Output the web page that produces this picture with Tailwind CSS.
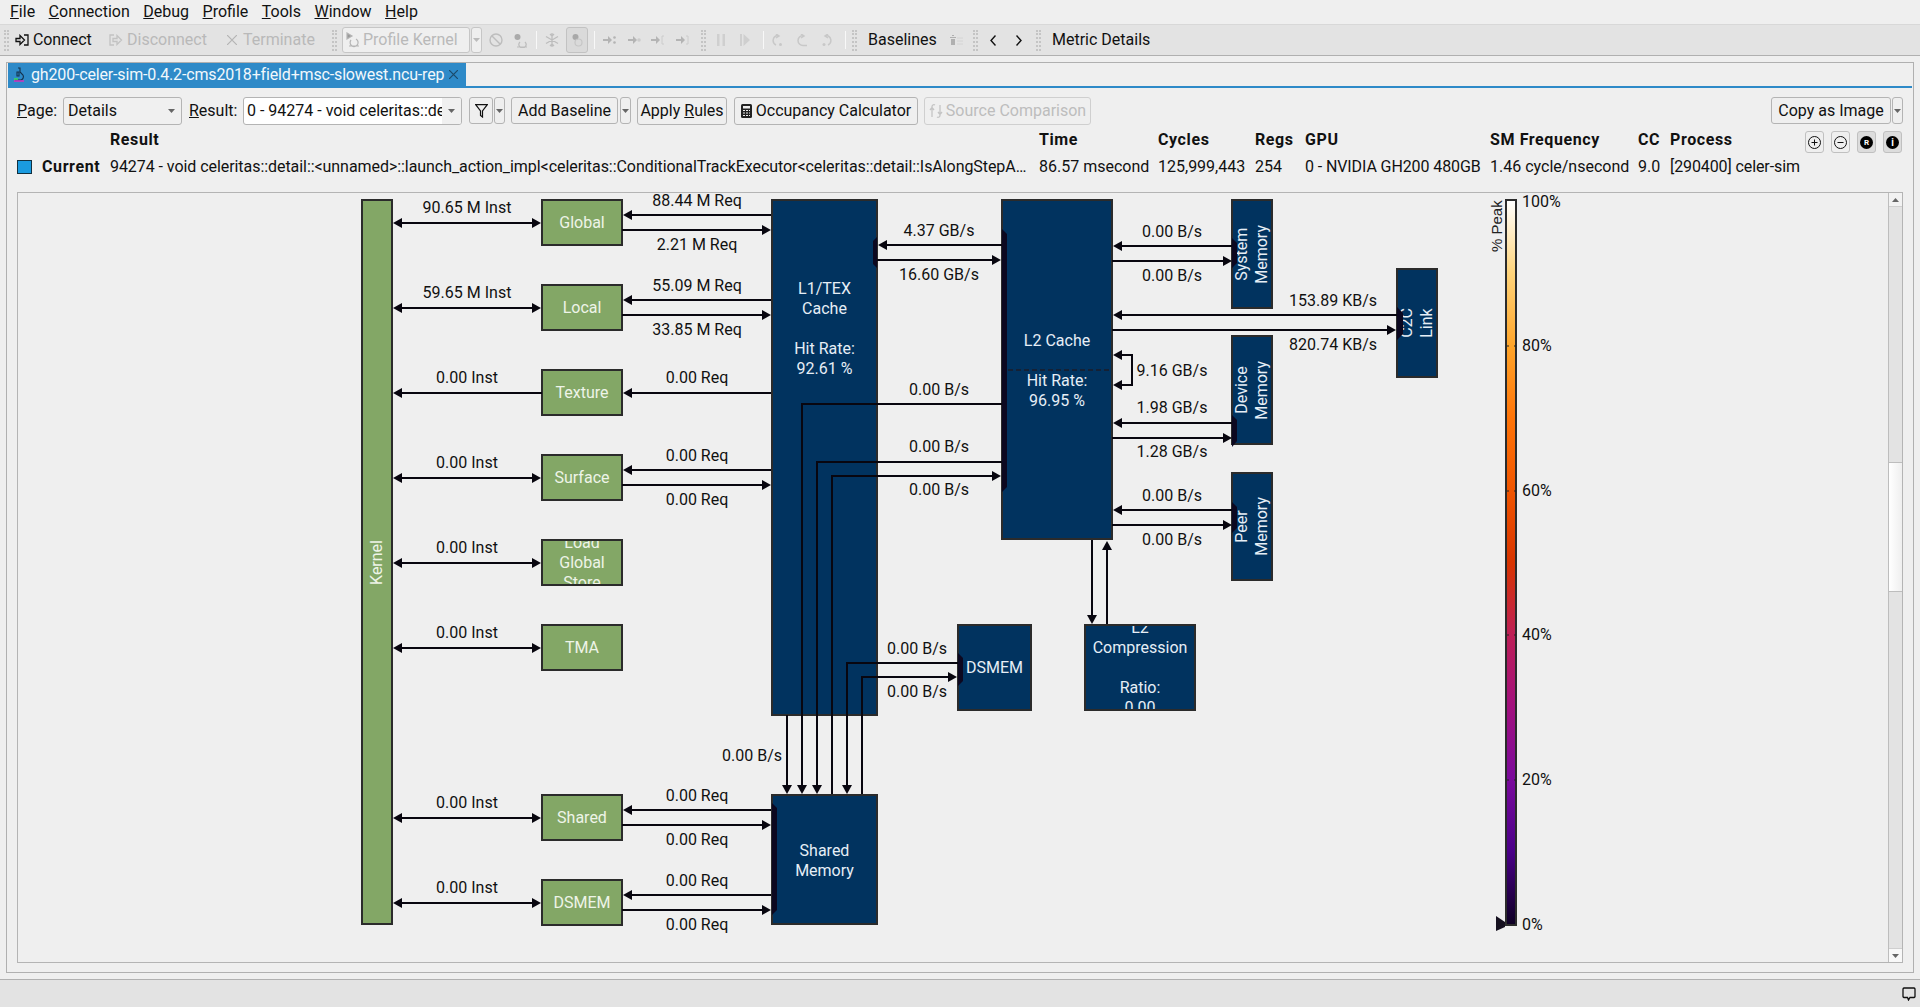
<!DOCTYPE html>
<html lang="en">
<head>
  <meta charset="UTF-8">
  <title>Nsight Compute</title>
  <script src="https://cdn.jsdelivr.net/npm/@tailwindcss/browser@4"></script>
</head>
<body class="w-[1920px] h-[1007px] overflow-hidden flex flex-col bg-[#efefef] text-[#111] text-base [font-family:Roboto,sans-serif]">

  <svg class="hidden">
    <symbol id="caret" viewBox="0 0 7 4"><path d="M0 0H7L3.5 4z" fill="#666"/></symbol>
    <symbol id="caretOff" viewBox="0 0 7 4"><path d="M0 0H7L3.5 4z" fill="#bbb"/></symbol>
  </svg>

  <!-- Menu bar -->
  <div class="h-[25px] shrink-0 flex items-center gap-[13.5px] pl-[10px] border-b border-[#d8d8d8]">
    <span><u>F</u>ile</span>
    <span><u>C</u>onnection</span>
    <span><u>D</u>ebug</span>
    <span><u>P</u>rofile</span>
    <span><u>T</u>ools</span>
    <span><u>W</u>indow</span>
    <span><u>H</u>elp</span>
  </div>

  <!-- Toolbar -->
  <div class="h-[31px] shrink-0 flex items-center pl-[4px] bg-[#e3e3e3] border-b border-[#b0b0b0] text-[#b9b9b9]">
    <div class="w-[5px] h-[21px] border-x-2 border-dotted border-[#c4c4c4]"></div>
    <svg class="ml-[6px] w-[14px] h-[12px]" viewBox="0 0 14 12" fill="none" stroke="#111" stroke-width="1.3"><path d="M1 4.5H5V1.5L9.5 6L5 10.5V7.5H1z"/><path d="M9 1H13V11H9"/></svg>
    <span class="ml-[4px] w-[76px] text-[#111] tracking-[-0.1px]">Connect</span>
    <svg class="w-[14px] h-[12px]" viewBox="0 0 14 12" fill="none" stroke="#c2c2c2" stroke-width="1.3"><path d="M5 1H1V11H5"/><path d="M4 4.5H8V1.5L12.5 6L8 10.5V7.5H4z"/></svg>
    <span class="ml-[4px] w-[100px]">Disconnect</span>
    <svg class="w-[10px] h-[10px]" viewBox="0 0 10 10" stroke="#b4b4b4" stroke-width="1.2"><path d="M0 0L10 10M10 0L0 10"/></svg>
    <span class="ml-[6px] w-[89px]">Terminate</span>
    <div class="w-[5px] h-[21px] border-x-2 border-dotted border-[#c4c4c4]"></div>
    <div class="ml-[5px] w-[128px] h-[26px] flex items-center pl-[3px] bg-[#efefef] border border-[#c6c6c6] rounded-[3px]">
      <svg class="w-[15px] h-[16px]" viewBox="0 0 15 16" fill="none" stroke="#b5b5b5" stroke-width="1.2"><path d="M1 1L6 4L1 7z" fill="#999"/><path d="M5 8a4 4 0 1 0 5 -1M3 14H13"/></svg>
      <span class="ml-[2px]">Profile Kernel</span>
    </div>
    <div class="ml-px w-[11px] h-[26px] flex items-center justify-center bg-[#efefef] border border-[#c6c6c6] rounded-[3px]"><svg class="w-[7px] h-[4px]"><use href="#caretOff"/></svg></div>
    <div class="w-[25px] ml-px flex justify-center">
      <svg class="w-[14px] h-[14px]" viewBox="0 0 14 14" fill="none" stroke="#bdbdbd" stroke-width="1.4"><circle cx="7" cy="7" r="6"/><path d="M3 3L11 11"/></svg>
    </div>
    <div class="w-[24px] flex justify-center">
      <svg class="w-[15px] h-[15px]" viewBox="0 0 15 15" fill="none" stroke="#bdbdbd" stroke-width="1.2"><circle cx="4.500" cy="4" r="3" fill="#aaa" stroke="none"/><path d="M7 9a3.500 3.500 0 1 0 5 0M4 14H14"/></svg>
    </div>
    <div class="ml-[4px] w-px h-[18px] bg-[#f8f8f8]"></div>
    <div class="w-[8px]"></div>
    <svg class="w-[14px] h-[14px]" viewBox="0 0 14 14" stroke="#bdbdbd" stroke-width="1.300" fill="none"><path d="M7 0V14M1 3.500L13 10.500M13 3.500L1 10.500M5 1L7 3L9 1M5 13L7 11L9 13"/></svg>
    <div class="ml-[7px] w-[22px] h-[26px] flex items-center justify-center bg-[#dadada] border border-[#c2c2c2] rounded-[3px]">
      <svg class="w-[15px] h-[15px]" viewBox="0 0 15 15" fill="none" stroke="#c6c6c6" stroke-width="1.2"><circle cx="5.500" cy="4" r="3" fill="#a8a8a8" stroke="none"/><circle cx="8.500" cy="9.500" r="3.500"/></svg>
    </div>
    <div class="ml-[6px] w-px h-[18px] bg-[#f8f8f8]"></div>

    <!-- Step buttons -->
    <div class="w-[28px] flex justify-center">
      <svg class="w-[13px] h-[10px]" viewBox="0 0 13 10" fill="#b4b4b4"><path d="M0 4H5V1L9 5L5 9V6H0z"/><circle cx="11.500" cy="2.500" r="1.300"/><circle cx="11.500" cy="7.500" r="1.300"/></svg>
    </div>
    <div class="w-[22px] flex justify-center">
      <svg class="w-[13px] h-[10px]" viewBox="0 0 13 10" fill="#b4b4b4"><path d="M0 4H5V1L9 5L5 9V6H0z"/><circle cx="11" cy="5" r="1.800" fill="#ccc"/></svg>
    </div>
    <div class="w-[24px] flex justify-center">
      <svg class="w-[13px] h-[10px]" viewBox="0 0 13 10" fill="#b4b4b4"><path d="M0 4H5V1L9 5L5 9V6H0z"/><path d="M13 1H11V9H13" fill="none" stroke="#ccc"/></svg>
    </div>
    <div class="w-[26px] flex justify-center">
      <svg class="w-[13px] h-[10px]" viewBox="0 0 13 10" fill="#b4b4b4"><path d="M0 4H5V1L9 5L5 9V6H0z"/><path d="M10 1H12V9H10" fill="none" stroke="#ccc"/></svg>
    </div>
    <div class="ml-[6px] w-[5px] h-[21px] border-x-2 border-dotted border-[#c4c4c4]"></div>
    <div class="w-[30px] flex justify-center">
      <svg class="w-[8px] h-[12px]" viewBox="0 0 8 12" fill="#cfcfcf"><path d="M0 0H2.500V12H0zM5.500 0H8V12H5.500z"/></svg>
    </div>
    <div class="w-[18px] flex justify-center">
      <svg class="w-[10px] h-[12px]" viewBox="0 0 10 12" fill="#cfcfcf"><path d="M0 0H2V12H0zM3.500 0L10 6L3.500 12z"/></svg>
    </div>
    <div class="ml-[9px] w-px h-[18px] bg-[#f8f8f8]"></div>
    <div class="w-[26px] flex justify-center">
      <svg class="w-[12px] h-[13px]" viewBox="0 0 12 13" fill="none" stroke="#c8c8c8" stroke-width="1.500"><path d="M7 1.500A5 5 0 0 0 5 11M5 0L8 2L5 4"/><circle cx="9.500" cy="10.500" r="1.500" fill="#c8c8c8" stroke="none"/></svg>
    </div>
    <div class="w-[24px] flex justify-center">
      <svg class="w-[12px] h-[13px]" viewBox="0 0 12 13" fill="none" stroke="#c8c8c8" stroke-width="1.500"><path d="M7 1.500A5 5 0 0 0 7 11.500H11M5 0L8 2L5 4"/></svg>
    </div>
    <div class="w-[26px] flex justify-center">
      <svg class="w-[12px] h-[13px]" viewBox="0 0 12 13" fill="none" stroke="#c8c8c8" stroke-width="1.500"><path d="M5 1.500A5 5 0 0 1 7 11M7 0L4 2L7 4"/><circle cx="3" cy="10.500" r="1.500" fill="#c8c8c8" stroke="none"/></svg>
    </div>
    <div class="ml-[5px] w-px h-[18px] bg-[#f8f8f8]"></div>
    <div class="ml-[6px] w-[5px] h-[21px] border-x-2 border-dotted border-[#c4c4c4]"></div>
    <span class="ml-[11px] w-[78px] text-[#111]">Baselines</span>
    <div class="w-[20px] flex justify-center">
      <svg class="w-[14px] h-[11px]" viewBox="0 0 14 11" fill="#b0b0b0"><path d="M1 2H7V3H1zM2 4H6V10H2zM3 0H5V1H3z"/><path d="M8 3H14M8 6H14M8 9H14" stroke="#d4d4d4"/></svg>
    </div>
    <div class="ml-[7px] w-[5px] h-[21px] border-x-2 border-dotted border-[#c4c4c4]"></div>
    <div class="w-[30px] flex justify-center">
      <svg class="w-[6px] h-[11px]" viewBox="0 0 6 11" fill="none" stroke="#111" stroke-width="1.400"><path d="M5.500 0.500L1 5.500L5.500 10.500"/></svg>
    </div>
    <div class="w-[22px] flex justify-center">
      <svg class="w-[6px] h-[11px]" viewBox="0 0 6 11" fill="none" stroke="#111" stroke-width="1.400"><path d="M0.500 0.500L5 5.500L0.500 10.500"/></svg>
    </div>
    <div class="ml-[6px] w-[5px] h-[21px] border-x-2 border-dotted border-[#c4c4c4]"></div>
    <span class="ml-[11px] text-[#111]">Metric Details</span>
  </div>

  <div class="h-[6px] shrink-0"></div>

  <!-- Report panel -->
  <div class="ml-[6px] w-[1908px] h-[911px] shrink-0 border border-[#b0b0b0] flex flex-col">

    <!-- Tab -->
    <div class="ml-px mr-px h-[25px] shrink-0 border-b-2 border-[#2e8ac8]">
      <div class="w-[458px] h-[23px] bg-[#2e8ac8] flex items-center pl-[5px] text-[#f2f8fc]">
        <svg class="w-[12px] h-[15px]" viewBox="0 0 12 15" fill="none" stroke="#14304a" stroke-width="1.100"><path d="M5 1H7V5L10 8A3.500 3.500 0 0 1 8 13H2"/><path d="M4 5H6V9H4z"/><path d="M1 12H5" stroke="#3ddc5a" stroke-width="1.500"/><path d="M1 14H11" stroke="#d030c0" stroke-width="1.500"/></svg>
        <span class="ml-[6px] whitespace-nowrap tracking-[-0.16px]">gh200-celer-sim-0.4.2-cms2018+field+msc-slowest.ncu-rep</span>
        <svg class="ml-[5px] w-[9px] h-[9px]" viewBox="0 0 9 9" stroke="#1b4a6a" stroke-width="1.200"><path d="M0 0L9 9M9 0L0 9"/></svg>
      </div>
    </div>

    <!-- Page / Result controls -->
    <div class="mt-[9px] h-[28px] shrink-0 flex items-start pl-[10px] pr-[10px]">
      <span class="w-[46px] leading-[28px]"><u>P</u>age:</span>
      <div class="w-[119px] h-[28px] flex items-center justify-between pl-[4px] pr-[6px] border border-[#b4b4b4] rounded-[3px] bg-[#f0f0f0]">
        <span>Details</span><svg class="w-[7px] h-[4px]"><use href="#caret"/></svg>
      </div>
      <span class="ml-[7px] w-[54px] leading-[28px]"><u>R</u>esult:</span>
      <div class="w-[219px] h-[28px] flex items-center border border-[#b4b4b4] rounded-[3px] bg-white overflow-hidden">
        <span class="pl-[3px] w-[198px] whitespace-nowrap overflow-hidden">0 - 94274 - void celeritas::detail</span>
        <div class="flex-1 h-full flex items-center justify-center bg-[#f0f0f0]"><svg class="w-[7px] h-[4px]"><use href="#caret"/></svg></div>
      </div>
      <div class="ml-[7px] w-[24px] h-[27px] flex items-center justify-center border border-[#b4b4b4] rounded-[3px]">
        <svg class="w-[13px] h-[14px]" viewBox="0 0 13 14" fill="none" stroke="#111" stroke-width="1.200"><path d="M0.700 0.700H12.300L7.500 7V13L5.500 11.500V7z"/></svg>
      </div>
      <div class="ml-px w-[11px] h-[27px] flex items-center justify-center border border-[#b4b4b4] rounded-[3px]"><svg class="w-[7px] h-[4px]"><use href="#caret"/></svg></div>
      <div class="ml-[6px] w-[107px] h-[27px] flex items-center justify-center border border-[#b4b4b4] rounded-[3px]">Add Baseline</div>
      <div class="ml-[2px] w-[11px] h-[27px] flex items-center justify-center border border-[#b4b4b4] rounded-[3px]"><svg class="w-[7px] h-[4px]"><use href="#caret"/></svg></div>
      <div class="ml-[6px] w-[90px] h-[28px] flex items-center justify-center border border-[#b4b4b4] rounded-[3px]"><span>Apply <u>R</u>ules</span></div>
      <div class="ml-[7px] w-[184px] h-[28px] flex items-center justify-center gap-[4px] border border-[#b4b4b4] rounded-[3px]">
        <svg class="w-[11px] h-[14px]" viewBox="0 0 11 14"><rect width="11" height="14" rx="1.500" fill="#222"/><rect x="2" y="2" width="7" height="2.500" fill="#eee"/><path d="M2 6.500H4M5 6.500H7M8 6.500H9M2 9H4M5 9H7M8 9H9M2 11.500H4M5 11.500H7M8 11.500H9" stroke="#eee"/></svg>
        <span class="whitespace-nowrap">Occupancy Calculator</span>
      </div>
      <div class="ml-[6px] w-[167px] h-[28px] flex items-center justify-center gap-[3px] border border-[#cfcfcf] rounded-[3px] text-[#bdbdbd]">
        <svg class="w-[14px] h-[14px]" viewBox="0 0 14 14" fill="none" stroke="#c4c4c4" stroke-width="1.300"><path d="M3 13V4M1 6L3 3.500L5 6M3 3a2 2 0 0 1 3 -2M11 1V10M9 8L11 10.500L13 8M11 11a2 2 0 0 1 -3 2"/></svg>
        <span class="whitespace-nowrap">Source Comparison</span>
      </div>
      <div class="ml-auto w-[120px] h-[27px] flex items-center justify-center border border-[#b4b4b4] rounded-[3px]">Copy as Image</div>
      <div class="ml-px w-[11px] h-[27px] flex items-center justify-center border border-[#b4b4b4] rounded-[3px]"><svg class="w-[7px] h-[4px]"><use href="#caret"/></svg></div>
    </div>

    <!-- Result table -->
    <div class="mt-[5px] shrink-0 pl-[10px] grid grid-cols-[93px_929px_119px_97px_50px_185px_148px_32px_135px_auto] grid-rows-[20px_20px] gap-y-[7px] leading-5 whitespace-nowrap">
      <span></span>
      <span class="font-bold tracking-[0.6px]">Result</span>
      <span class="font-bold tracking-[0.6px]">Time</span>
      <span class="font-bold tracking-[0.6px]">Cycles</span>
      <span class="font-bold tracking-[0.6px]">Regs</span>
      <span class="font-bold tracking-[0.6px]">GPU</span>
      <span class="font-bold tracking-[0.6px]">SM Frequency</span>
      <span class="font-bold tracking-[0.6px]">CC</span>
      <span class="font-bold tracking-[0.6px]">Process</span>
      <div class="flex gap-[7px] mt-px">
        <div class="w-[19px] h-[22px] flex items-center justify-center border border-[#c0c0c0] rounded-[3px]">
          <svg class="w-[13px] h-[13px]" viewBox="0 0 13 13" fill="none" stroke="#111"><circle cx="6.500" cy="6.500" r="6"/><path d="M3.500 6.500H9.500M6.500 3.500V9.500"/></svg>
        </div>
        <div class="w-[19px] h-[22px] flex items-center justify-center border border-[#c0c0c0] rounded-[3px]">
          <svg class="w-[13px] h-[13px]" viewBox="0 0 13 13" fill="none" stroke="#111"><circle cx="6.500" cy="6.500" r="6"/><path d="M3.500 6.500H9.500"/></svg>
        </div>
        <div class="w-[19px] h-[22px] flex items-center justify-center border border-[#c0c0c0] rounded-[3px] bg-[#dcdcdc]">
          <div class="w-[13px] h-[13px] rounded-full bg-black text-white text-[8px] leading-[13px] text-center font-bold">R</div>
        </div>
        <div class="w-[19px] h-[22px] flex items-center justify-center border border-[#c0c0c0] rounded-[3px] bg-[#dcdcdc]">
          <div class="w-[13px] h-[13px] rounded-full bg-black text-white text-[10px] leading-[13px] text-center font-bold">i</div>
        </div>
      </div>

      <div class="flex items-center">
        <div class="w-[15px] h-[14px] bg-[#1a9be0] border border-[#12303f]"></div>
        <span class="ml-[10px] font-bold tracking-[0.6px]">Current</span>
      </div>
      <span class="overflow-hidden tracking-[-0.06px]">94274 - void celeritas::detail::&lt;unnamed&gt;::launch_action_impl&lt;celeritas::ConditionalTrackExecutor&lt;celeritas::detail::IsAlongStepA…</span>
      <span>86.57 msecond</span>
      <span>125,999,443</span>
      <span>254</span>
      <span class="tracking-[-0.1px]">0 - NVIDIA GH200 480GB</span>
      <span>1.46 cycle/nsecond</span>
      <span>9.0</span>
      <span class="tracking-[-0.1px]">[290400] celer-sim</span>
    </div>

    <!-- Diagram view -->
    <div class="mt-[15px] ml-[10px] w-[1886px] h-[771px] shrink-0 border-y border-l border-r border-[#b4b4b4] flex">
      <div class="relative flex-1 overflow-hidden">
        <div class="absolute -left-[18px] -top-[193px] w-[1920px] h-[1007px] leading-5 text-center [&>div]:absolute [&>div]:flex [&>div]:items-center [&>div]:justify-center [&>div]:overflow-hidden [&>div]:border-2 [&>div]:border-[#2b2b2b]">

          <!-- Kernel-side units -->
          <div class="left-[361px] top-[199px] w-[32px] h-[726px] bg-[#83a766] text-[#eef4e8]"><span class="[writing-mode:vertical-rl] rotate-180">Kernel</span></div>
          <div class="left-[541px] top-[199px] w-[82px] h-[47px] bg-[#83a766] text-[#eef4e8]">Global</div>
          <div class="left-[541px] top-[284px] w-[82px] h-[47px] bg-[#83a766] text-[#eef4e8]">Local</div>
          <div class="left-[541px] top-[369px] w-[82px] h-[47px] bg-[#83a766] text-[#eef4e8]">Texture</div>
          <div class="left-[541px] top-[454px] w-[82px] h-[47px] bg-[#83a766] text-[#eef4e8]">Surface</div>
          <div class="left-[541px] top-[539px] w-[82px] h-[47px] bg-[#83a766] text-[#eef4e8]"><span class="shrink-0">Load<br>Global<br>Store</span></div>
          <div class="left-[541px] top-[624px] w-[82px] h-[47px] bg-[#83a766] text-[#eef4e8]">TMA</div>
          <div class="left-[541px] top-[794px] w-[82px] h-[47px] bg-[#83a766] text-[#eef4e8]">Shared</div>
          <div class="left-[541px] top-[879px] w-[82px] h-[47px] bg-[#83a766] text-[#eef4e8]">DSMEM</div>

          <!-- Caches and memories -->
          <div class="left-[771px] top-[199px] w-[107px] h-[517px] bg-[#01335f] text-[#e6eef6] !items-start"><span class="mt-[78px]">L1/TEX<br>Cache<br><br>Hit Rate:<br>92.61 %</span></div>
          <div class="left-[771px] top-[794px] w-[107px] h-[131px] pt-[2px] bg-[#01335f] text-[#e6eef6]">Shared<br>Memory</div>
          <div class="left-[1001px] top-[199px] w-[112px] h-[341px] bg-[#01335f] text-[#e6eef6] !items-start"><span class="mt-[130px]">L2 Cache<br><br>Hit Rate:<br>96.95 %</span></div>
          <div class="left-[1231px] top-[199px] w-[42px] h-[110px] bg-[#01335f] text-[#e6eef6]"><span class="[writing-mode:vertical-rl] rotate-180">System<br>Memory</span></div>
          <div class="left-[1231px] top-[335px] w-[42px] h-[110px] bg-[#01335f] text-[#e6eef6]"><span class="[writing-mode:vertical-rl] rotate-180">Device<br>Memory</span></div>
          <div class="left-[1231px] top-[472px] w-[42px] h-[109px] bg-[#01335f] text-[#e6eef6]"><span class="[writing-mode:vertical-rl] rotate-180">Peer<br>Memory</span></div>
          <div class="left-[1396px] top-[268px] w-[42px] h-[110px] bg-[#01335f] text-[#e6eef6]"><span class="[writing-mode:vertical-rl] rotate-180">C2C<br>Link</span></div>
          <div class="left-[957px] top-[624px] w-[75px] h-[87px] bg-[#01335f] text-[#e6eef6]">DSMEM</div>
          <div class="left-[1084px] top-[624px] w-[112px] h-[87px] bg-[#01335f] text-[#e6eef6]"><span class="shrink-0">L2<br>Compression<br><br>Ratio:<br>0.00</span></div>

          <!-- Colour scale -->
          <div class="left-[1505px] top-[199px] w-[12px] h-[727px] bg-[linear-gradient(to_bottom,#fff,#ffd47a_10%,#ffa52a_20%,#ff7408_30%,#f05500_40%,#d83400_50%,#bd1f56_60%,#a2107e_70%,#7a0a9c_80%,#4a0088_90%,#0e0024)]"></div>

          <!-- Links and labels -->
          <svg class="absolute left-0 top-0 w-[1920px] h-[1007px]" viewBox="0 0 1920 1007">
            <defs>
              <marker id="a" viewBox="0 0 9 10" refX="5" refY="5" markerWidth="9" markerHeight="10" markerUnits="userSpaceOnUse" orient="auto-start-reverse"><path d="M0 0L9 5L0 10z" fill="#08060f"/></marker>
            </defs>

            <g fill="#0c0820">
              <polygon points="877 237 873 241 873 264 877 268"/>
              <polygon points="1002 229 1007 234 1007 487 1002 492"/>
              <polygon points="1232 238 1237 243 1237 263 1232 268"/>
              <polygon points="1397 307 1403 313 1403 334 1397 340"/>
              <polygon points="1232 415 1237 420 1237 441 1232 447"/>
              <polygon points="1232 502 1237 507 1237 528 1232 533"/>
              <polygon points="958 653 963 658 963 681 958 686"/>
              <polygon points="772 803 777 808 777 910 772 915"/>
            </g>
            <path d="M1008 370H1112" stroke="#1c1c28" stroke-width="1.500" stroke-dasharray="5 3" fill="none"/>

            <g fill="none" stroke="#08060f" stroke-width="2">
              <path d="M397 223H537" marker-start="url(#a)" marker-end="url(#a)"/>
              <path d="M397 308H537" marker-start="url(#a)" marker-end="url(#a)"/>
              <path d="M542 393H397" marker-end="url(#a)"/>
              <path d="M397 478H537" marker-start="url(#a)" marker-end="url(#a)"/>
              <path d="M397 563H537" marker-start="url(#a)" marker-end="url(#a)"/>
              <path d="M397 648H537" marker-start="url(#a)" marker-end="url(#a)"/>
              <path d="M397 818H537" marker-start="url(#a)" marker-end="url(#a)"/>
              <path d="M397 903H537" marker-start="url(#a)" marker-end="url(#a)"/>

              <path d="M771 215H627" marker-end="url(#a)"/>
              <path d="M622 230H767" marker-end="url(#a)"/>
              <path d="M771 300H627" marker-end="url(#a)"/>
              <path d="M622 315H767" marker-end="url(#a)"/>
              <path d="M771 393H627" marker-end="url(#a)"/>
              <path d="M771 470H627" marker-end="url(#a)"/>
              <path d="M622 485H767" marker-end="url(#a)"/>
              <path d="M771 810H627" marker-end="url(#a)"/>
              <path d="M622 825H767" marker-end="url(#a)"/>
              <path d="M771 895H627" marker-end="url(#a)"/>
              <path d="M622 910H767" marker-end="url(#a)"/>

              <path d="M1002 245H882" marker-end="url(#a)"/>
              <path d="M877 260H997" marker-end="url(#a)"/>
              <path d="M1002 404H802V790" marker-end="url(#a)"/>
              <path d="M1002 462H817V790" marker-end="url(#a)"/>
              <path d="M832 794V476H997" marker-end="url(#a)"/>
              <path d="M787 715V790" marker-end="url(#a)"/>
              <path d="M958 663H847V790" marker-end="url(#a)"/>
              <path d="M862 794V677H953" marker-end="url(#a)"/>

              <path d="M1232 246H1117" marker-end="url(#a)"/>
              <path d="M1112 261H1228" marker-end="url(#a)"/>
              <path d="M1397 315H1117" marker-end="url(#a)"/>
              <path d="M1112 330H1392" marker-end="url(#a)"/>
              <path d="M1117 355H1132V385H1117" marker-start="url(#a)" marker-end="url(#a)"/>
              <path d="M1232 423H1117" marker-end="url(#a)"/>
              <path d="M1112 438H1228" marker-end="url(#a)"/>
              <path d="M1232 510H1117" marker-end="url(#a)"/>
              <path d="M1112 525H1228" marker-end="url(#a)"/>
              <path d="M1092 540V620" marker-end="url(#a)"/>
              <path d="M1107 624V545" marker-end="url(#a)"/>
            </g>

            <g fill="#111" font-size="16" text-anchor="middle">
              <text x="467" y="213">90.65 M Inst</text>
              <text x="467" y="298">59.65 M Inst</text>
              <text x="467" y="383">0.00 Inst</text>
              <text x="467" y="468">0.00 Inst</text>
              <text x="467" y="553">0.00 Inst</text>
              <text x="467" y="638">0.00 Inst</text>
              <text x="467" y="808">0.00 Inst</text>
              <text x="467" y="893">0.00 Inst</text>

              <text x="697" y="206">88.44 M Req</text>
              <text x="697" y="250">2.21 M Req</text>
              <text x="697" y="291">55.09 M Req</text>
              <text x="697" y="335">33.85 M Req</text>
              <text x="697" y="383">0.00 Req</text>
              <text x="697" y="461">0.00 Req</text>
              <text x="697" y="505">0.00 Req</text>
              <text x="697" y="801">0.00 Req</text>
              <text x="697" y="845">0.00 Req</text>
              <text x="697" y="886">0.00 Req</text>
              <text x="697" y="930">0.00 Req</text>

              <text x="939" y="236">4.37 GB/s</text>
              <text x="939" y="280">16.60 GB/s</text>
              <text x="939" y="395">0.00 B/s</text>
              <text x="939" y="452">0.00 B/s</text>
              <text x="939" y="495">0.00 B/s</text>
              <text x="917" y="654">0.00 B/s</text>
              <text x="917" y="697">0.00 B/s</text>
              <text x="752" y="761">0.00 B/s</text>

              <text x="1172" y="237">0.00 B/s</text>
              <text x="1172" y="281">0.00 B/s</text>
              <text x="1172" y="376">9.16 GB/s</text>
              <text x="1172" y="413">1.98 GB/s</text>
              <text x="1172" y="457">1.28 GB/s</text>
              <text x="1172" y="501">0.00 B/s</text>
              <text x="1172" y="545">0.00 B/s</text>
              <text x="1333" y="306">153.89 KB/s</text>
              <text x="1333" y="350">820.74 KB/s</text>
            </g>

            <!-- Scale ticks, marker and labels -->
            <path d="M1507 346H1509M1514 346H1516M1507 491H1509M1514 491H1516M1507 635H1509M1514 635H1516M1507 780H1509M1514 780H1516" stroke="#222" fill="none"/>
            <path d="M1496 916L1505 922V927L1496 931z" fill="#15101f"/>
            <g fill="#111" font-size="16">
              <text x="1522" y="207">100%</text>
              <text x="1522" y="351">80%</text>
              <text x="1522" y="496">60%</text>
              <text x="1522" y="640">40%</text>
              <text x="1522" y="785">20%</text>
              <text x="1522" y="930">0%</text>
            </g>
            <text transform="translate(1502 252) rotate(-90)" fill="#222" font-size="15" font-family="Liberation Sans">% Peak</text>
          </svg>
        </div>
      </div>

      <!-- Scrollbar -->
      <div class="w-[14px] shrink-0 flex flex-col bg-[#e3e3e3] border-l border-[#bdbdbd]">
        <div class="h-[14px] flex items-center justify-center bg-[#f2f2f2] border-b border-[#cfcfcf]"><svg class="w-[7px] h-[4px] rotate-180"><use href="#caret"/></svg></div>
        <div class="mt-[255px] h-[130px] bg-linear-to-r from-white to-[#efefef] border-y border-[#bdbdbd]"></div>
        <div class="mt-auto h-[14px] flex items-center justify-center bg-[#f8f8f8] border-t border-[#cfcfcf]"><svg class="w-[7px] h-[4px]"><use href="#caret"/></svg></div>
      </div>
    </div>
  </div>

  <div class="h-[6px] shrink-0"></div>

  <!-- Status bar -->
  <div class="flex-1 flex items-center justify-end pr-[4px] bg-[#e3e3e3] border-t border-[#b0b0b0]">
    <svg class="w-[14px] h-[14px]" viewBox="0 0 14 14" fill="none" stroke="#111" stroke-width="1.300"><path d="M2 1H12A1.300 1.300 0 0 1 13 2V9.500A1.300 1.300 0 0 1 12 10.500H8L6.500 13L5.500 10.500H2A1.300 1.300 0 0 1 1 9.500V2A1.300 1.300 0 0 1 2 1z"/></svg>
  </div>
</body>
</html>
